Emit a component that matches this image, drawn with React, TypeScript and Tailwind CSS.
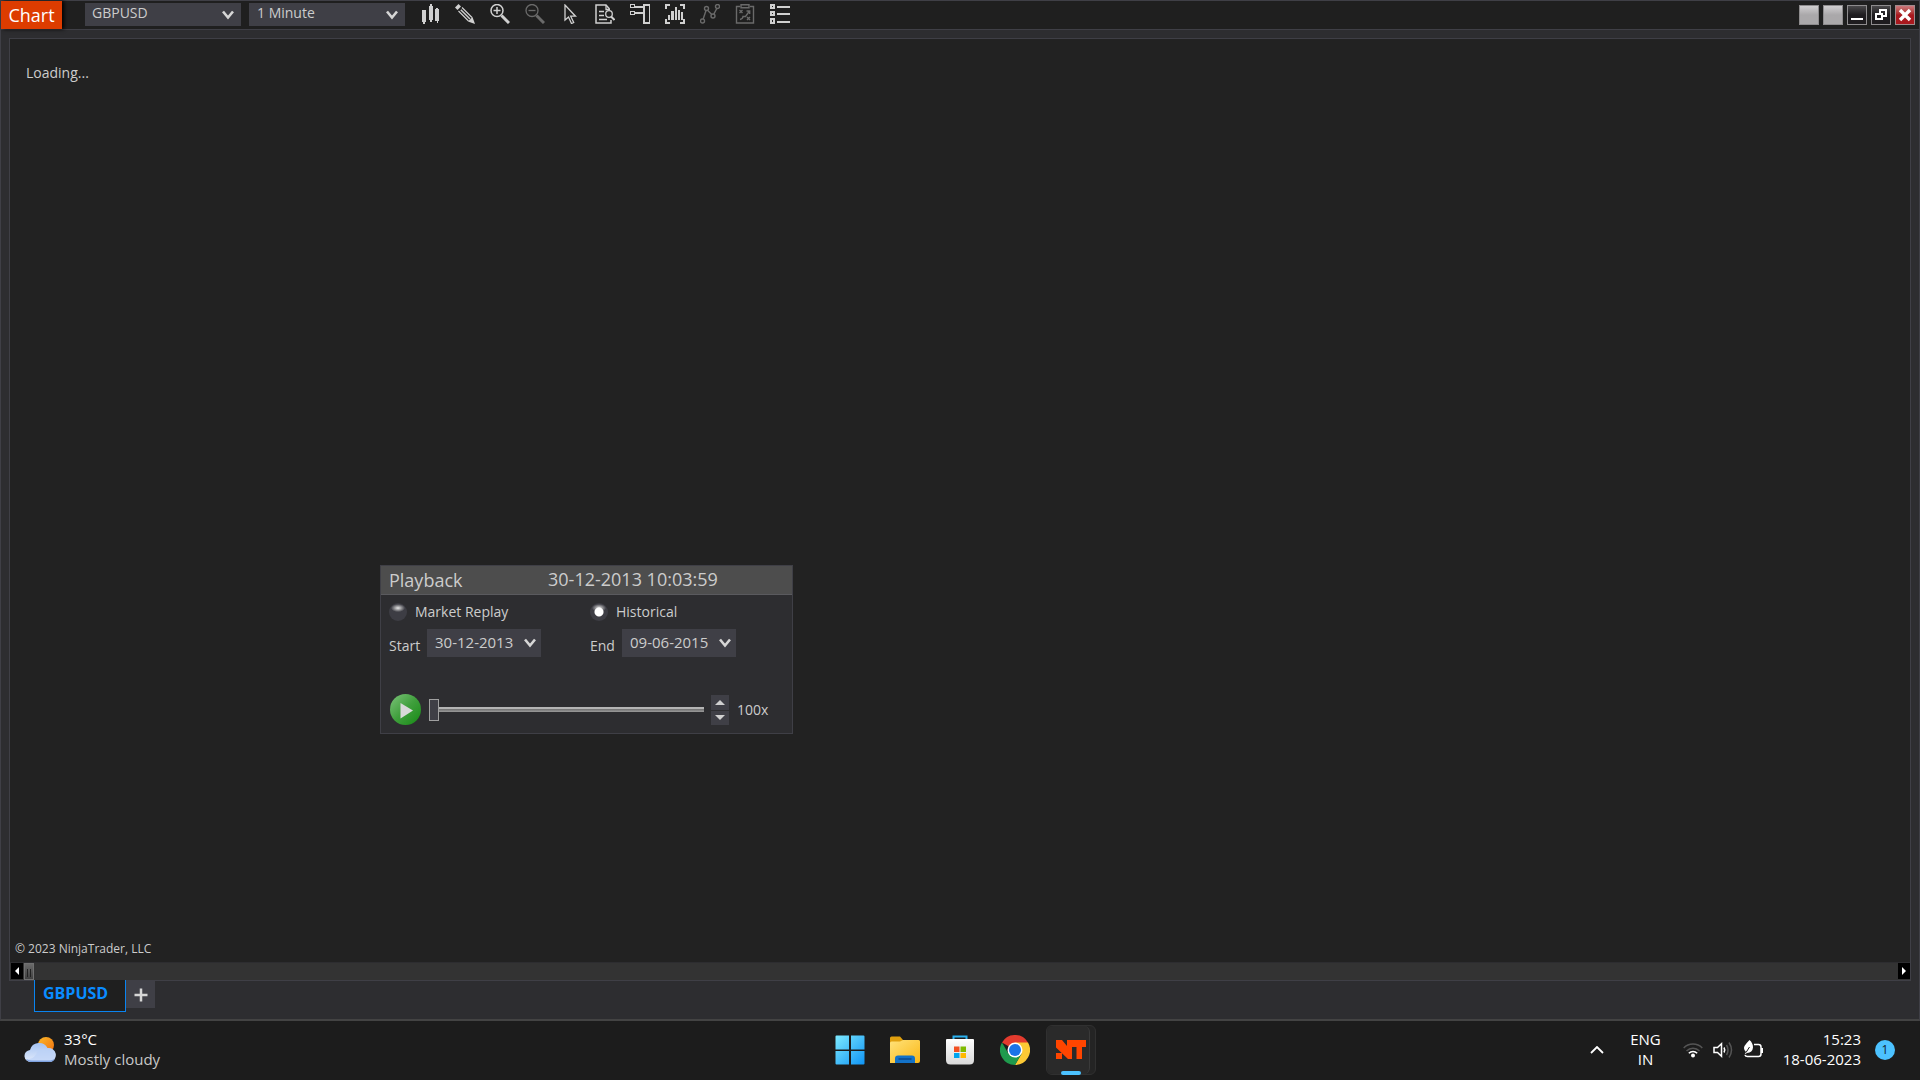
import { useState, ReactNode } from "react";

interface ToolButton {
  label: string;
  icon: ReactNode;
  disabled?: boolean;
}

const tools: ToolButton[] = [
  {
    label: "Chart style",
    icon: (
      <g fill="currentColor" stroke="none" shapeRendering="crispEdges">
        <path d="M2 6h4v12h-1v2h-2v-2h-1z" />
        <path d="M9 2h1v-2h2v2h1v14h-1v2h-2v-2h-1z" />
        <path d="M15 5h1v-1h2v1h1v12h-1v2h-1v-2h-2z" />
      </g>
    ),
  },
  {
    label: "Drawing tools",
    icon: (
      <g>
        <path d="M0 3.500 3.500 0 6 2.500 2.500 6z" fill="currentColor" stroke="none" />
        <path d="M3.500 7 13.500 17M7 3.500 17 13.500" strokeWidth="1.2" />
        <path d="M5.800 5.800 15 15" strokeWidth="1.5" />
        <path d="M17.500 13 13 17.500 20 20z" fill="currentColor" stroke="none" />
      </g>
    ),
  },
  {
    label: "Zoom in",
    icon: (
      <g>
        <circle cx="7" cy="6.5" r="6" strokeWidth="1.5" />
        <path d="M7 3v7M3.5 6.5h7" strokeWidth="1.5" />
        <path d="M11.5 11.5 19 19" strokeWidth="3" />
      </g>
    ),
  },
  {
    label: "Zoom out",
    disabled: true,
    icon: (
      <g>
        <circle cx="7" cy="6.5" r="6" strokeWidth="1.3" />
        <path d="M3.5 6.5h7" strokeWidth="1.3" />
        <path d="M11.5 11.5 19 19" strokeWidth="3" />
      </g>
    ),
  },
  {
    label: "Cursor",
    icon: <path d="M5 1v15l3.500-3 3 6.500 2.200-1-3-6.300H15.500z" strokeWidth="1.3" />,
  },
  {
    label: "Data box",
    icon: (
      <g>
        <path d="M16 16v3H1V1h10l3.500 4" strokeWidth="1.5" />
        <path d="M11 1v4.500h4" strokeWidth="1.3" />
        <path d="M4 7.500h5M4 11.500h5M4 15.500h8" strokeWidth="1.3" />
        <circle cx="14" cy="10" r="3.3" strokeWidth="1.3" />
        <path d="M16 12.500 19.500 16" strokeWidth="2" />
      </g>
    ),
  },
  {
    label: "Chart trader",
    icon: (
      <g strokeWidth="1.3" shapeRendering="crispEdges">
        <path d="M0.500 0.500h4v3h-4zM0.500 7.500h4v3h-4z" />
        <path d="M5 2.500h8M5 8.500h8" strokeWidth="2" />
        <path d="M13.500 0.500h6v18.500h-6z" strokeWidth="2" />
      </g>
    ),
  },
  {
    label: "Indicators",
    icon: (
      <g shapeRendering="crispEdges">
        <path d="M1 5V1h4M15 1h4v4M19 15v4h-4M5 19H1v-4" strokeWidth="2" />
        <g fill="currentColor" stroke="none">
          <path d="M3 11h2v5h-2zM6 7h3v9h-3zM10 3h2v13h-2zM13 6h2v10h-2zM16 8h2v8h-2z" />
        </g>
      </g>
    ),
  },
  {
    label: "Strategies",
    disabled: true,
    icon: (
      <g strokeWidth="1.4">
        <circle cx="2.5" cy="17" r="2" />
        <circle cx="6.500" cy="4.500" r="2" />
        <circle cx="13" cy="12" r="2" />
        <circle cx="17.500" cy="2.500" r="2" />
        <path d="M3.200 15 6 6.500M7.500 6.300 11.800 10.500M13.800 10.200 16.800 4.500" />
      </g>
    ),
  },
  {
    label: "Strategy performance",
    disabled: true,
    icon: (
      <g strokeWidth="1.4">
        <path d="M5 2.500H1.500V19h17V2.500H15" />
        <path d="M6 0.700h8v3H6z" />
        <path d="m4.500 6 3 3m0-3-3 3M12 13l3 3m0-3-3 3" />
        <path d="M5 15.500c2-.5 3-1.500 3-3h2.500L14.500 7M11.500 7h3.200v3" />
      </g>
    ),
  },
  {
    label: "Properties",
    icon: (
      <g strokeWidth="1.500" shapeRendering="crispEdges">
        <path d="M1 1h3v3H1zM1 8h3v3H1zM1 15h3v4H1z" />
        <path d="M7 3h13M7 10h13M7 18h13" strokeWidth="2" />
      </g>
    ),
  },
];

interface DropDownProps {
  id: string;
  label: string;
  options: string[];
  wrap: string;
  field: string;
  arrow: string;
}

function DropDown({ id, label, options, wrap, field, arrow }: DropDownProps) {
  return (
    <div className={`relative ${wrap}`}>
      <select
        id={id}
        aria-label={label}
        className={`block h-full w-full appearance-none bg-[#3f3f46] text-[#cccccc] outline-none ${field}`}
      >
        {options.map((o) => (
          <option key={o}>{o}</option>
        ))}
      </select>
      <svg viewBox="0 0 12 10" className={`pointer-events-none absolute top-1/2 h-[10px] w-3 -translate-y-1/2 ${arrow}`} fill="none" stroke="#d6d6d6" strokeWidth="2.6">
        <path d="M1 1.500 6 7.500 11 1.500" />
      </svg>
    </div>
  );
}

function TitleBar() {
  return (
    <header className="flex h-[29px] items-center border-b border-[#3f3f46] bg-[#1f1f1f]">
      <h1 className="flex h-full w-[61px] items-center justify-center bg-[#dd3c00] text-lg text-white shadow-[2px_0_4px_#000000]">
        Chart
      </h1>
      <DropDown id="instrument" label="Instrument" options={["GBPUSD"]} wrap="ml-[23px] mb-px h-[23px] w-[156px]" field="pb-[3px] pl-[7px] text-sm leading-4" arrow="right-[7px]" />
      <DropDown id="interval" label="Interval" options={["1 Minute"]} wrap="ml-2 mb-px h-[23px] w-[156px]" field="pb-[3px] pl-2 text-sm leading-4" arrow="right-[7px]" />
      <div className="ml-[7px] flex h-full items-center">
        {tools.map((t) => (
          <button
            key={t.label}
            aria-label={t.label}
            disabled={t.disabled}
            className="flex h-full w-[35px] items-center justify-center pb-[2px] text-[#d0d0d0] disabled:text-[#6a6a6a]"
          >
            <svg viewBox="0 0 20 20" className="h-5 w-5" fill="none" stroke="currentColor">
              {t.icon}
            </svg>
          </button>
        ))}
      </div>
      <div className="ml-auto mr-1 flex gap-1">
        <button aria-label="Link instrument" className="h-5 w-5 border border-[#8e8c8e] bg-linear-to-b from-[#d0ced0] to-[#aaa8aa] to-50%" />
        <button aria-label="Link interval" className="h-5 w-5 border border-[#8e8c8e] bg-linear-to-b from-[#d0ced0] to-[#aaa8aa] to-50%" />
        <button aria-label="Minimize" className="h-5 w-5 border border-[#8e8c8e] bg-linear-to-b from-[#4a494b] to-[#1e1c1f] to-50%">
          <svg viewBox="0 0 18 18" className="h-full w-full">
            <path d="M3 12h12v2H3z" fill="#fff" />
          </svg>
        </button>
        <button aria-label="Restore" className="h-5 w-5 border border-[#8e8c8e] bg-linear-to-b from-[#4a494b] to-[#1e1c1f] to-50%">
          <svg viewBox="0 0 18 18" className="h-full w-full" fill="none" stroke="#fff" strokeWidth="2" shapeRendering="crispEdges">
            <path d="M8 7V4h6v6h-3" />
            <path d="M4 8h6v5H4z" />
          </svg>
        </button>
        <button aria-label="Close" className="h-5 w-5 border border-[#a08a8c] bg-linear-to-b from-[#c9787c] to-[#a9181e] to-50%">
          <svg viewBox="0 0 18 18" className="h-full w-full" stroke="#fff" strokeWidth="3.4">
            <path d="m4 4 10 10M14 4 4 14" />
          </svg>
        </button>
      </div>
    </header>
  );
}

const radioStyle =
  "h-[18px] w-[18px] appearance-none rounded-full bg-[radial-gradient(ellipse_7px_4px_at_50%_28%,#e8e8e8_0%,#8b8b8e_55%,transparent_100%)] bg-[#3d3d44] checked:bg-[radial-gradient(circle_at_50%_50%,#ffffff_0px,#ffffff_4px,transparent_5px),radial-gradient(ellipse_7px_4px_at_50%_28%,#e8e8e8_0%,#8b8b8e_55%,transparent_100%)]";

function Playback() {
  const [mode, setMode] = useState("historical");
  const [pos, setPos] = useState(0);
  const [speed, setSpeed] = useState(100);

  return (
    <section aria-label="Playback" className="absolute left-[370px] top-[526px] w-[413px] border border-[#3f3f46] bg-[#2d2d30] text-sm leading-5 text-[#cccccc]">
      <div className="flex h-[29px] items-center border-b border-[#5a5a5e] bg-[#4d4d4d] pl-2">
        <h2 className="w-[159px] text-lg leading-6">Playback</h2>
        <time className="pb-[2px] text-lg leading-6">30-12-2013 10:03:59</time>
      </div>
      <div className="grid grid-cols-[201px_1fr] gap-y-[7px] pl-2 pt-[7px]">
        <label className="flex items-center gap-2">
          <input type="radio" name="mode" checked={mode === "replay"} onChange={() => setMode("replay")} className={radioStyle} />
          Market Replay
        </label>
        <label className="flex items-center gap-2">
          <input type="radio" name="mode" checked={mode === "historical"} onChange={() => setMode("historical")} className={radioStyle} />
          Historical
        </label>
        <div className="flex items-center">
          <label htmlFor="start" className="w-[38px] pt-[6px]">Start</label>
          <DropDown id="start" label="Start" options={["30-12-2013"]} wrap="h-7 w-[114px]" field="pb-[3px] pl-2 text-[15px] leading-5" arrow="right-[5px]" />
        </div>
        <div className="flex items-center">
          <label htmlFor="end" className="w-8 pt-[6px]">End</label>
          <DropDown id="end" label="End" options={["09-06-2015"]} wrap="h-7 w-[114px]" field="pb-[3px] pl-2 text-[15px] leading-5" arrow="right-[5px]" />
        </div>
      </div>
      <div className="flex items-center pb-2 pl-[9px] pt-[37px]">
        <button aria-label="Play" className="flex h-[31px] w-[31px] items-center justify-center rounded-full bg-linear-to-br from-[#7cc47a] via-[#3f9f3c] to-[#0c8a0c]">
          <svg viewBox="0 0 31 31" className="h-full w-full">
            <path d="M10.500 9v15.500L23 16.500z" fill="#d9d9d9" />
          </svg>
        </button>
        <input
          type="range"
          aria-label="Position"
          min={0}
          max={100}
          value={pos}
          onChange={(e) => setPos(Number(e.target.value))}
          className="ml-2 h-[22px] w-[275px] appearance-none bg-linear-to-b from-[#b4b4b4] from-40% via-[#707070] via-40% to-[#9a9a9a] bg-[length:100%_5px] bg-center bg-no-repeat [&::-webkit-slider-thumb]:h-[22px] [&::-webkit-slider-thumb]:w-[10px] [&::-webkit-slider-thumb]:appearance-none [&::-webkit-slider-thumb]:border [&::-webkit-slider-thumb]:border-[#a0a0a0] [&::-webkit-slider-thumb]:bg-[#3f3f46]"
        />
        <div className="ml-[7px] flex w-[18px] flex-col gap-px">
          <button aria-label="Faster" onClick={() => setSpeed(speed + 100)} className="flex h-[15px] items-center justify-center bg-[#3f3f46]">
            <svg viewBox="0 0 10 5" className="h-[5px] w-[10px]" fill="#d0d0d0"><path d="M0 5 5 0l5 5z" /></svg>
          </button>
          <button aria-label="Slower" onClick={() => setSpeed(Math.max(100, speed - 100))} className="flex h-[14px] items-center justify-center bg-[#3f3f46]">
            <svg viewBox="0 0 10 5" className="h-[5px] w-[10px]" fill="#d0d0d0"><path d="M0 0 5 5l5-5z" /></svg>
          </button>
        </div>
        <span className="ml-2">{speed}x</span>
      </div>
    </section>
  );
}

function WeatherIcon() {
  return (
    <svg viewBox="0 0 32 28" className="h-7 w-8">
      <defs>
        <linearGradient id="sun" x1="0" y1="0" x2="1" y2="1">
          <stop offset="0" stopColor="#fbb829" />
          <stop offset="1" stopColor="#f07010" />
        </linearGradient>
        <linearGradient id="cloud" x1="0" y1="0" x2="0" y2="1">
          <stop offset="0" stopColor="#a5c3f2" />
          <stop offset="1" stopColor="#e2ebfb" />
        </linearGradient>
      </defs>
      <circle cx="22" cy="9" r="8" fill="url(#sun)" />
      <path d="M7 26a6 6 0 0 1-1-12 9.500 9.500 0 0 1 17.500-2A7 7 0 0 1 26 26z" fill="url(#cloud)" />
      <path d="M14 14c3-1 5 0 6 2a6.500 6.500 0 0 1 11 4 6 6 0 0 1-5 6H7a6 6 0 0 1-5-3c5 1 10-2 12-9z" fill="#bcd2f6" opacity="0.7" />
      <path d="M2 23c1 2 3 3 5 3h19c2 0 4-1.500 5-3.500-2 1.500-4 2-6 2H8c-2 0-4-.5-6-1.500z" fill="#7ea2e0" />
    </svg>
  );
}

const apps = [
  {
    label: "Start",
    icon: (
      <>
        <linearGradient id="win" x1="0" y1="0" x2="1" y2="1" >
          <stop offset="0" stopColor="#7deaff" />
          <stop offset="1" stopColor="#0f94f5" />
        </linearGradient>
        <path d="M.5 1.500q0-1 1-1H14v14H.5zM16 .5h12.500q1 0 1 1v13H16zM.5 16H14v13.500H1.500q-1 0-1-1zM16 16h13.500v12.500q0 1-1 1H16z" fill="url(#win)" />
      </>
    ),
  },
  {
    label: "File Explorer",
    icon: (
      <>
        <linearGradient id="folder" x1="0" y1="0" x2="1" y2="1">
          <stop offset="0" stopColor="#ffe27a" />
          <stop offset="1" stopColor="#fbb816" />
        </linearGradient>
        <path d="M0 3q0-1.500 1.500-1.500H10L13 5h15q2 0 2 2v4H0z" fill="#e0a00e" />
        <path d="M0 8q0-1.500 1.500-1.500H10L13 5h15.500Q30 5 30 6.500V26q0 2-2 2H0z" fill="url(#folder)" />
        <path d="M5 28v-4.500q0-3 3-3h14q3 0 3 3V28z" fill="#1372c8" />
        <path d="M8.500 24h13" stroke="#0b4a8e" strokeWidth="1.500" />
      </>
    ),
  },
  {
    label: "Microsoft Store",
    icon: (
      <>
        <linearGradient id="store" x1="0" y1="0" x2="0" y2="1">
          <stop offset="0" stopColor="#ffffff" />
          <stop offset="1" stopColor="#d9d9d9" />
        </linearGradient>
        <path d="M8.500 6V1.500h13V6" stroke="#2bb2f0" strokeWidth="2" fill="none" />
        <path d="M1 5q0-1 1-1h26q1 0 1 1v20q0 4.500-4.500 4.500h-19Q1 29.500 1 25z" fill="url(#store)" />
        <path d="M9 11.500h5.500V17H9z" fill="#f25022" />
        <path d="M15.500 11.500H21V17h-5.500z" fill="#7fba00" />
        <path d="M9 18h5.500v5H9z" fill="#00a4ef" />
        <path d="M15.500 18H21v5h-5.500z" fill="#ffb900" />
      </>
    ),
  },
  {
    label: "Google Chrome",
    icon: (
      <>
        <path d="M15 15 2 7.500a15 15 0 0 1 26 0z" fill="#e33b2e" />
        <path d="M28 7.500A15 15 0 0 1 15 30l6.500-11.200L15 7.500z" fill="#fcc934" />
        <path d="M2 7.500A15 15 0 0 0 15 30l6.500-11.200L8.500 18.800z" fill="#1f9a4d" />
        <circle cx="15" cy="15" r="7.500" fill="#fff" />
        <circle cx="15" cy="15" r="6" fill="#1a73e8" />
      </>
    ),
  },
];

function TaskBar() {
  return (
    <footer className="grid h-[59px] grid-cols-[1fr_auto_1fr] items-center bg-[#1c1c1c] pb-[2px] text-[15px] leading-5 text-white">
      <div className="flex items-center gap-2 pl-6">
        <WeatherIcon />
        <div className="pb-[2px]">
          <p>33°C</p>
          <p className="text-[#c8c8c8]">Mostly cloudy</p>
        </div>
      </div>

      <nav aria-label="Apps" className="flex pr-[2px]">
        {apps.map((a) => (
          <button key={a.label} aria-label={a.label} className="flex h-[50px] w-[55px] items-center justify-center">
            <svg viewBox="0 0 30 30" className="h-[30px] w-[30px]">
              {a.icon}
            </svg>
          </button>
        ))}
        <button aria-label="NinjaTrader" className="ml-1 h-[50px] w-[50px] rounded-md border border-[#303030] bg-[#242424] pr-[5px]">
          <span className="relative flex h-full w-full items-center justify-center rounded-md border-r border-[#3a3a3a] bg-[#2a2a2a]">
            <svg viewBox="0 0 30 20" className="ml-[6px] h-5 w-[30px]" fill="#ff4500">
              <path d="M0 0h6l5 6V0h19v7h-4v12h-5.500V7H16v12h-4L0 7.500z" />
              <path d="M0 13h6v6H0z" />
            </svg>
            <span className="absolute -bottom-px left-[14px] h-1 w-5 rounded-full bg-[#4cc2ff]" />
          </span>
        </button>
      </nav>

      <div className="flex items-center justify-end pr-[25px]">
        <button aria-label="Show hidden icons" className="mr-[26px]">
          <svg viewBox="0 0 14 8" className="h-2 w-[14px]" fill="none" stroke="#fff" strokeWidth="1.800">
            <path d="M1 7 7 1l6 6" />
          </svg>
        </button>
        <button className="mr-[22px] pb-[2px] text-center">
          ENG
          <br />
          IN
        </button>
        <button aria-label="Network, volume, battery" className="mr-[20px] flex gap-[10px]">
          <svg viewBox="0 0 20 20" className="h-5 w-5" fill="none" strokeWidth="1.500">
            <path d="M.7 8a13 13 0 0 1 18.600 0M3.500 11a9 9 0 0 1 13 0" stroke="#555" />
            <path d="M5.800 13.200a6 6 0 0 1 8.400 0" stroke="#fff" />
            <circle cx="10" cy="15.500" r="2" fill="#fff" />
          </svg>
          <svg viewBox="0 0 20 20" className="h-5 w-5" fill="none" strokeWidth="1.500">
            <path d="M1 7.500h3.500L8.500 3.700v12.600L4.500 12.500H1z" stroke="#fff" />
            <path d="M11 7.500q1.500 2.500 0 5" stroke="#fff" />
            <path d="M13.500 5q3 5 0 10M16 2.500q5 7.500 0 15" stroke="#555" />
          </svg>
          <svg viewBox="0 0 20 20" className="h-5 w-5" fill="none" strokeWidth="1.500">
            <path d="M11 4.500h4.500Q18 4.500 18 7v7q0 2.500-2.500 2.500H4.500Q2.500 16.500 2 15M19.300 8v5" stroke="#fff" />
            <path d="M6.500 0q3.500 3 3.500 7.500Q9.500 12.500 4 13l-2.500 1.500L3 12Q0 9 1.500 6 3.500 3 6.500 0z" fill="#fff" />
            <path d="M3 12.500 6.500 7" stroke="#1c1c1c" strokeWidth="1" />
          </svg>
        </button>
        <time className="mr-[14px] pb-[2px] text-right">
          15:23
          <br />
          18-06-2023
        </time>
        <button aria-label="Notifications" className="h-5 w-5 rounded-full bg-[#4cc2ff] text-xs text-[#10242e]">
          1
        </button>
      </div>
    </footer>
  );
}

export default function App() {
  return (
    <div className="flex min-h-screen flex-col bg-[#2d2d30] font-['Open_Sans','Noto_Sans',sans-serif]">
      <div className="flex flex-1 flex-col border border-b-2 border-[#3f3f46] border-b-[#434343]">
        <TitleBar />
        <main className="flex flex-1 flex-col px-2 pb-[6px] pt-2">
          <div className="flex flex-1 flex-col border border-[#3f3f46] bg-[#222222]">
            <div className="relative flex flex-1 flex-col justify-between text-[#cccccc]">
              <p className="pl-4 pt-6 text-sm leading-5">Loading...</p>
              <Playback />
              <p className="pb-[3px] pl-[5px] text-xs leading-5">© 2023 NinjaTrader, LLC</p>
            </div>
            <div className="flex h-[18px] border-t border-[#2d2d30] bg-[#333333] pl-px">
              <button aria-label="Scroll left" className="flex h-4 w-3 items-center justify-center bg-black">
                <svg viewBox="0 0 4 8" className="h-2 w-1" fill="#fff"><path d="M4 0v8L0 4z" /></svg>
              </button>
              <div className="ml-px flex h-full w-[10px] items-end justify-center gap-[2px] border border-[#707070] bg-linear-to-b from-[#6a6a6a] to-[#404040] pb-[2px]">
                <span className="h-2 w-px bg-[#222222]" />
                <span className="h-2 w-px bg-[#222222]" />
              </div>
              <button aria-label="Scroll right" className="ml-auto flex h-4 w-3 items-center justify-center bg-black">
                <svg viewBox="0 0 4 8" className="h-2 w-1" fill="#fff"><path d="M0 0v8l4-4z" /></svg>
              </button>
            </div>
          </div>
          <div className="-mt-px mb-px flex items-start pl-[25px]">
            <button className="h-8 w-[92px] border border-t-0 border-[#0a84f0] bg-[#1f1f1f] pb-[6px] pl-2 text-left text-base font-bold leading-5 text-[#0a8cff]">
              GBPUSD
            </button>
            <button aria-label="Add tab" className="mt-px flex h-[27px] w-[29px] items-center justify-center bg-[#3f3f46]">
              <svg viewBox="0 0 14 14" className="h-[14px] w-[14px]" stroke="#d6d6d6" strokeWidth="2.500">
                <path d="M7 .5v13M.5 7h13" />
              </svg>
            </button>
          </div>
        </main>
      </div>
      <TaskBar />
    </div>
  );
}
